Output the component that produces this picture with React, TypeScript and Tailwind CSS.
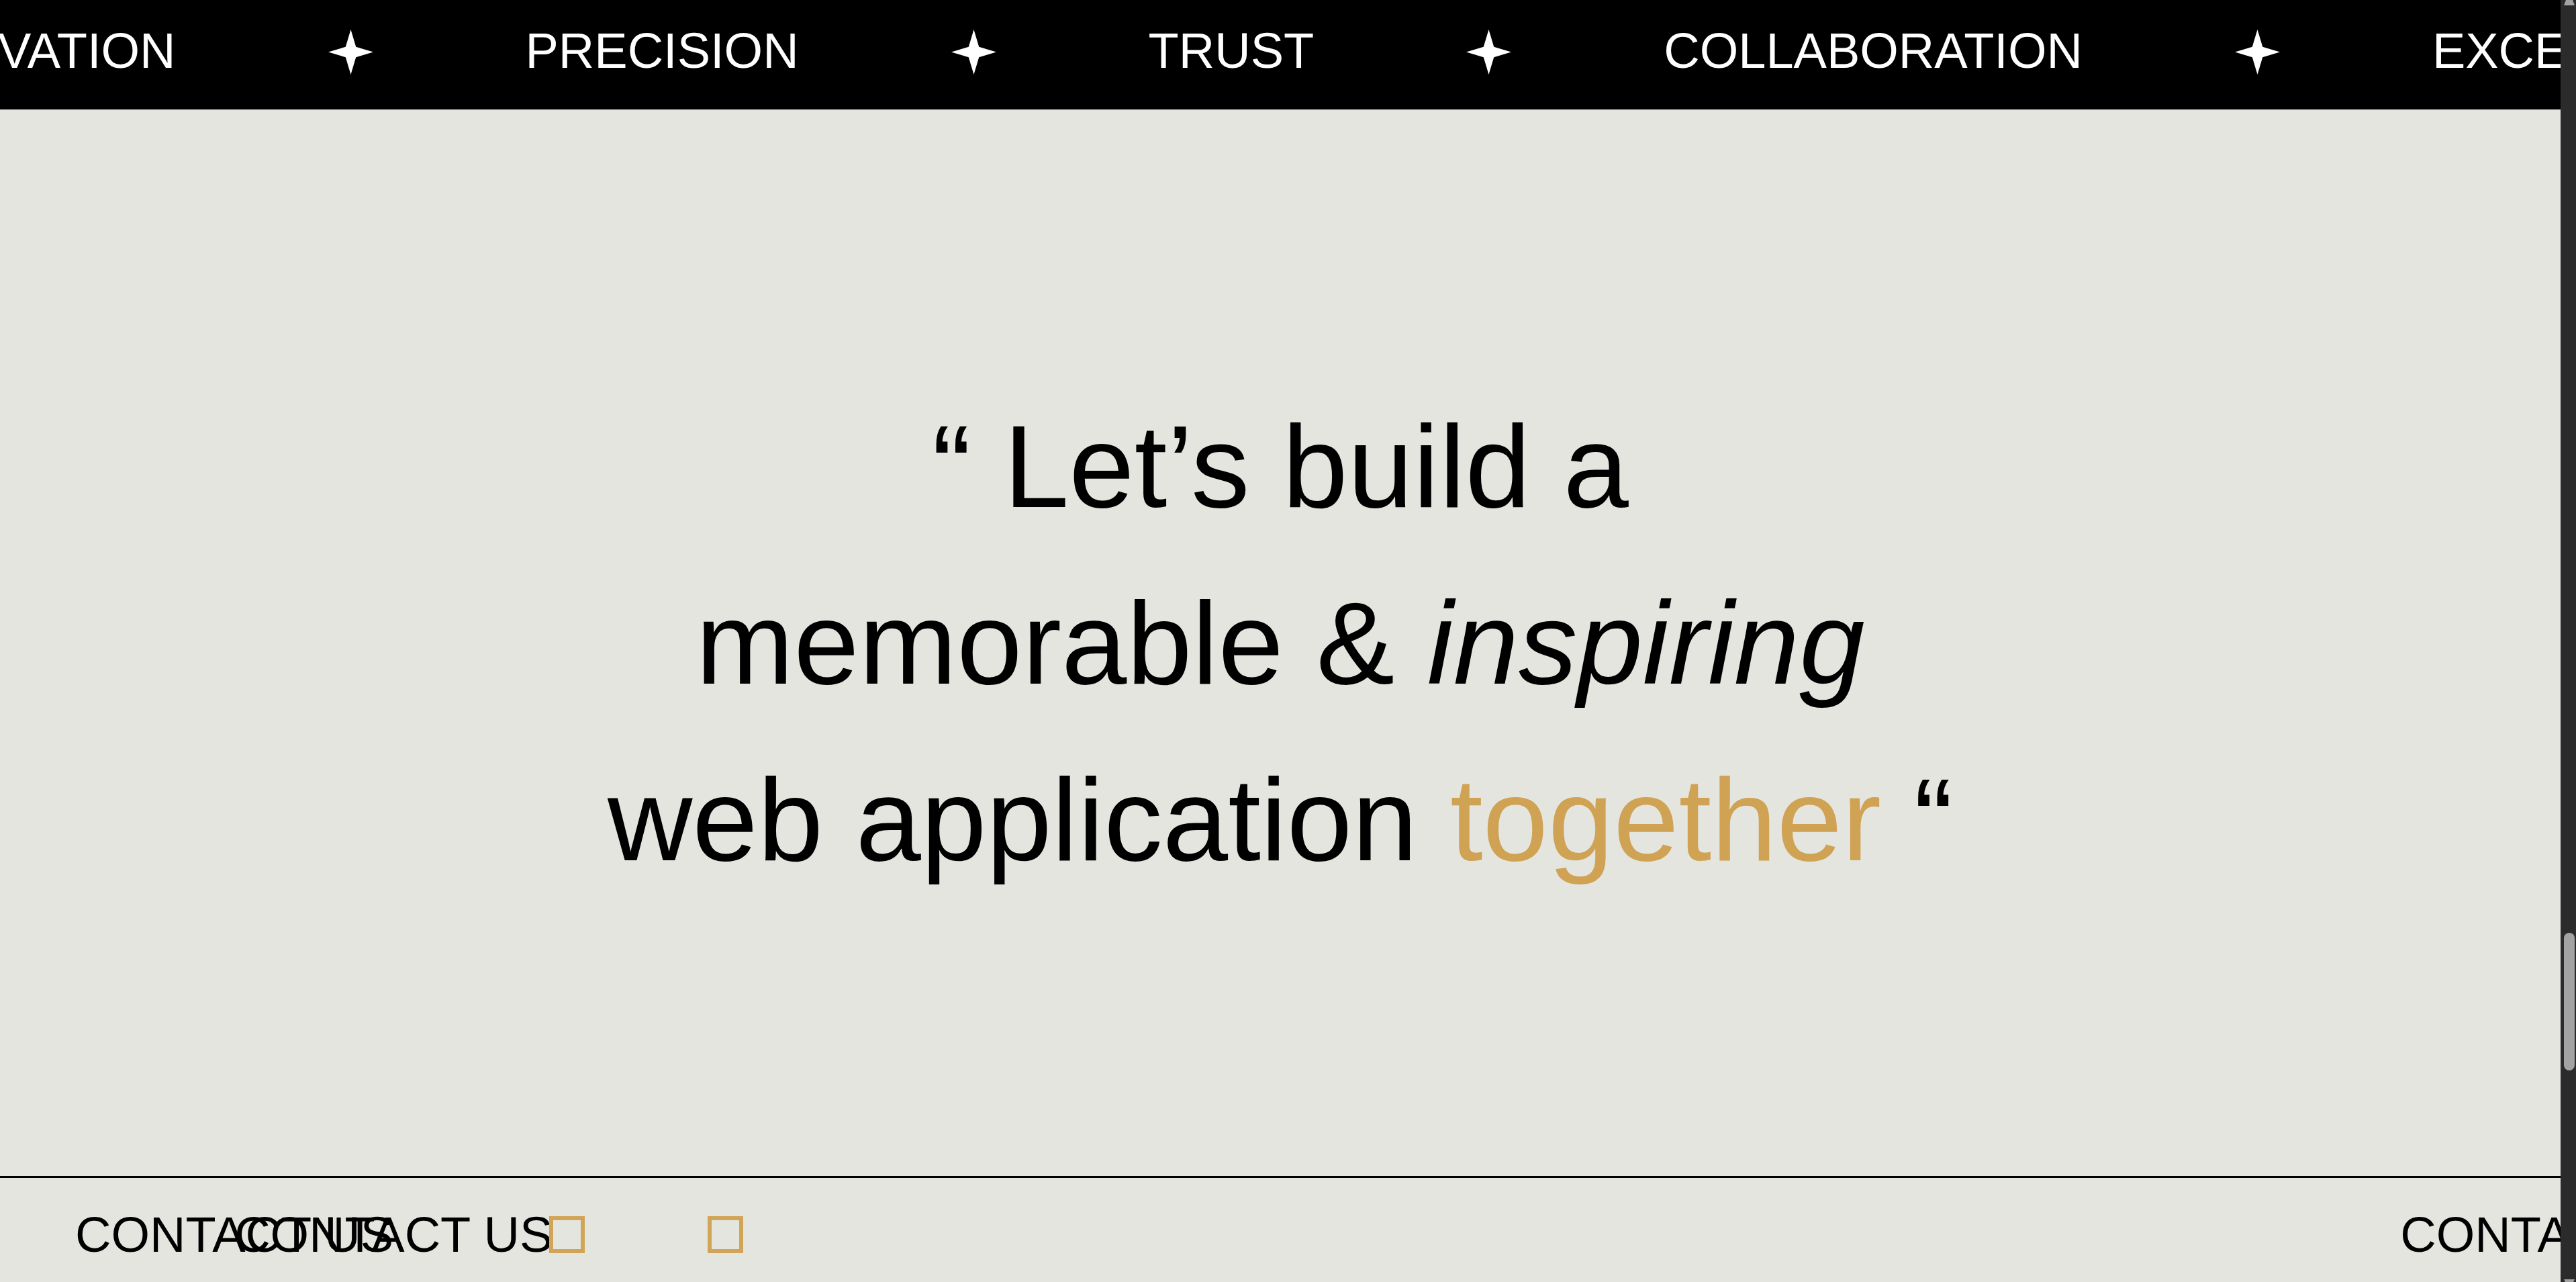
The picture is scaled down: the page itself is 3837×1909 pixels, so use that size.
import React from 'react';

const values = ['INNOVATION', 'PRECISION', 'TRUST', 'COLLABORATION', 'EXCELLENCE', 'INNOVATION'];

const Sparkle = () => (
  <svg viewBox="0 0 100 100" className="w-[67px] h-[67px] shrink-0 mt-[10px] fill-white">
    <path d="M50 0 L61.5 38.5 L100 50 L61.5 61.5 L50 100 L38.5 61.5 L0 50 L38.5 38.5 Z" />
  </svg>
);

const Scrollbar = () => (
  <div className="w-[23px] h-full shrink-0 bg-[#2b2b2b] flex flex-col">
    <svg viewBox="0 0 16 8" className="w-[16px] h-[8px] ml-[5px] fill-[#a3a3a3]">
      <polygon points="3,0 13,0 16,8 0,8" />
    </svg>
    <div className="mt-[1381px] ml-[5px] w-[16px] h-[205px] rounded-full bg-[#a3a3a3]" />
    <div className="flex-1" />
    <svg viewBox="0 0 16 4" className="w-[16px] h-[4px] ml-[5px] fill-[#a3a3a3]">
      <polygon points="0,0 16,0 14,4 2,4" />
    </svg>
  </div>
);

export default function App() {
  return (
    <div className="h-screen w-full flex bg-[#e4e5df] overflow-hidden font-['Liberation_Sans',Arial,sans-serif] text-black">
      <div className="flex-1 min-w-0 flex flex-col">
        {/* values ticker */}
        <div className="h-[163px] shrink-0 bg-black overflow-hidden">
          <div className="flex items-start gap-[227px] pt-[34px] ml-[-188px] whitespace-nowrap text-white text-[74px] leading-[83px]">
            {values.map((v, i) => (
              <React.Fragment key={i}>
                {i > 0 && <Sparkle />}
                <span className="shrink-0">{v}</span>
              </React.Fragment>
            ))}
          </div>
        </div>

        {/* quote */}
        <main className="flex-1 flex items-center justify-center">
          <p className="text-center text-[175px] leading-[263px] whitespace-nowrap">
            “ Let’s build a
            <br />
            memorable &amp; <em className="italic">inspiring</em>
            <br />
            web application <span className="text-[#cfa254]">together</span> “
          </p>
        </main>

        {/* contact ticker */}
        <div className="h-[158px] shrink-0 border-t-[3px] border-black overflow-hidden">
          <div className="flex items-start pt-[43px] whitespace-nowrap text-[74px] leading-[83px]">
            <span className="shrink-0 ml-[112px]">CONTACT US</span>
            <span className="shrink-0 ml-[-237px]">CONTACT US</span>
            <span className="shrink-0 ml-[-5px] mt-[14px] w-[53px] h-[55px] border-[6px] border-[#d1a457]" />
            <span className="shrink-0 ml-[183px] mt-[14px] w-[53px] h-[55px] border-[6px] border-[#d1a457]" />
            <span className="shrink-0 ml-[2468px]">CONTACT US</span>
          </div>
        </div>
      </div>
      <Scrollbar />
    </div>
  );
}
